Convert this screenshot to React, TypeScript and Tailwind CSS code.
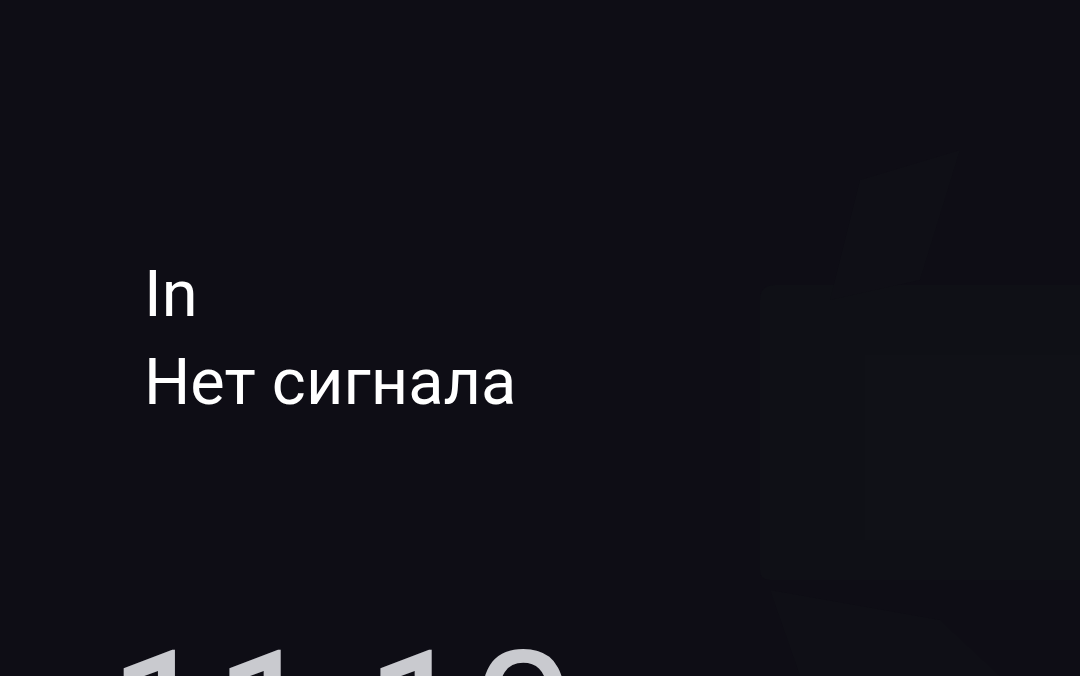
import React from 'react';

const Backdrop: React.FC = () => (
  <svg className="absolute inset-0 h-full w-full" viewBox="0 0 1080 676" preserveAspectRatio="none" aria-hidden="true">
    <path d="M760 300 Q760 285 775 285 L1080 285 L1080 580 L770 580 Q760 580 760 570 Z" fill="#0f1016" />
    <path d="M865 355 L1080 355 L1080 540 L865 540 Z" fill="#101117" />
    <path d="M860 180 L960 150 L920 280 L830 300 Z" fill="#0f0f16" />
    <path d="M770 590 L940 620 L1000 676 L800 676 Z" fill="#0f0f16" />
  </svg>
);

const App: React.FC = () => {
  return (
    <div className="relative h-[676px] w-[1080px] overflow-hidden bg-[#0e0d15]" style={{ fontFamily: 'Roboto, "Noto Sans", sans-serif' }}>
      <Backdrop />
      <div className="relative flex flex-col pl-[144px] pt-[250px]">
        <div className="text-[65px] leading-[88px] text-white">In</div>
        <div className="text-[65px] leading-[88px] text-white">Нет сигнала</div>
        <div className="-ml-[36px] mt-[199px] text-[188px] leading-[190px] text-[#c9cacf] whitespace-nowrap">11:10</div>
      </div>
    </div>
  );
};

export default App;
